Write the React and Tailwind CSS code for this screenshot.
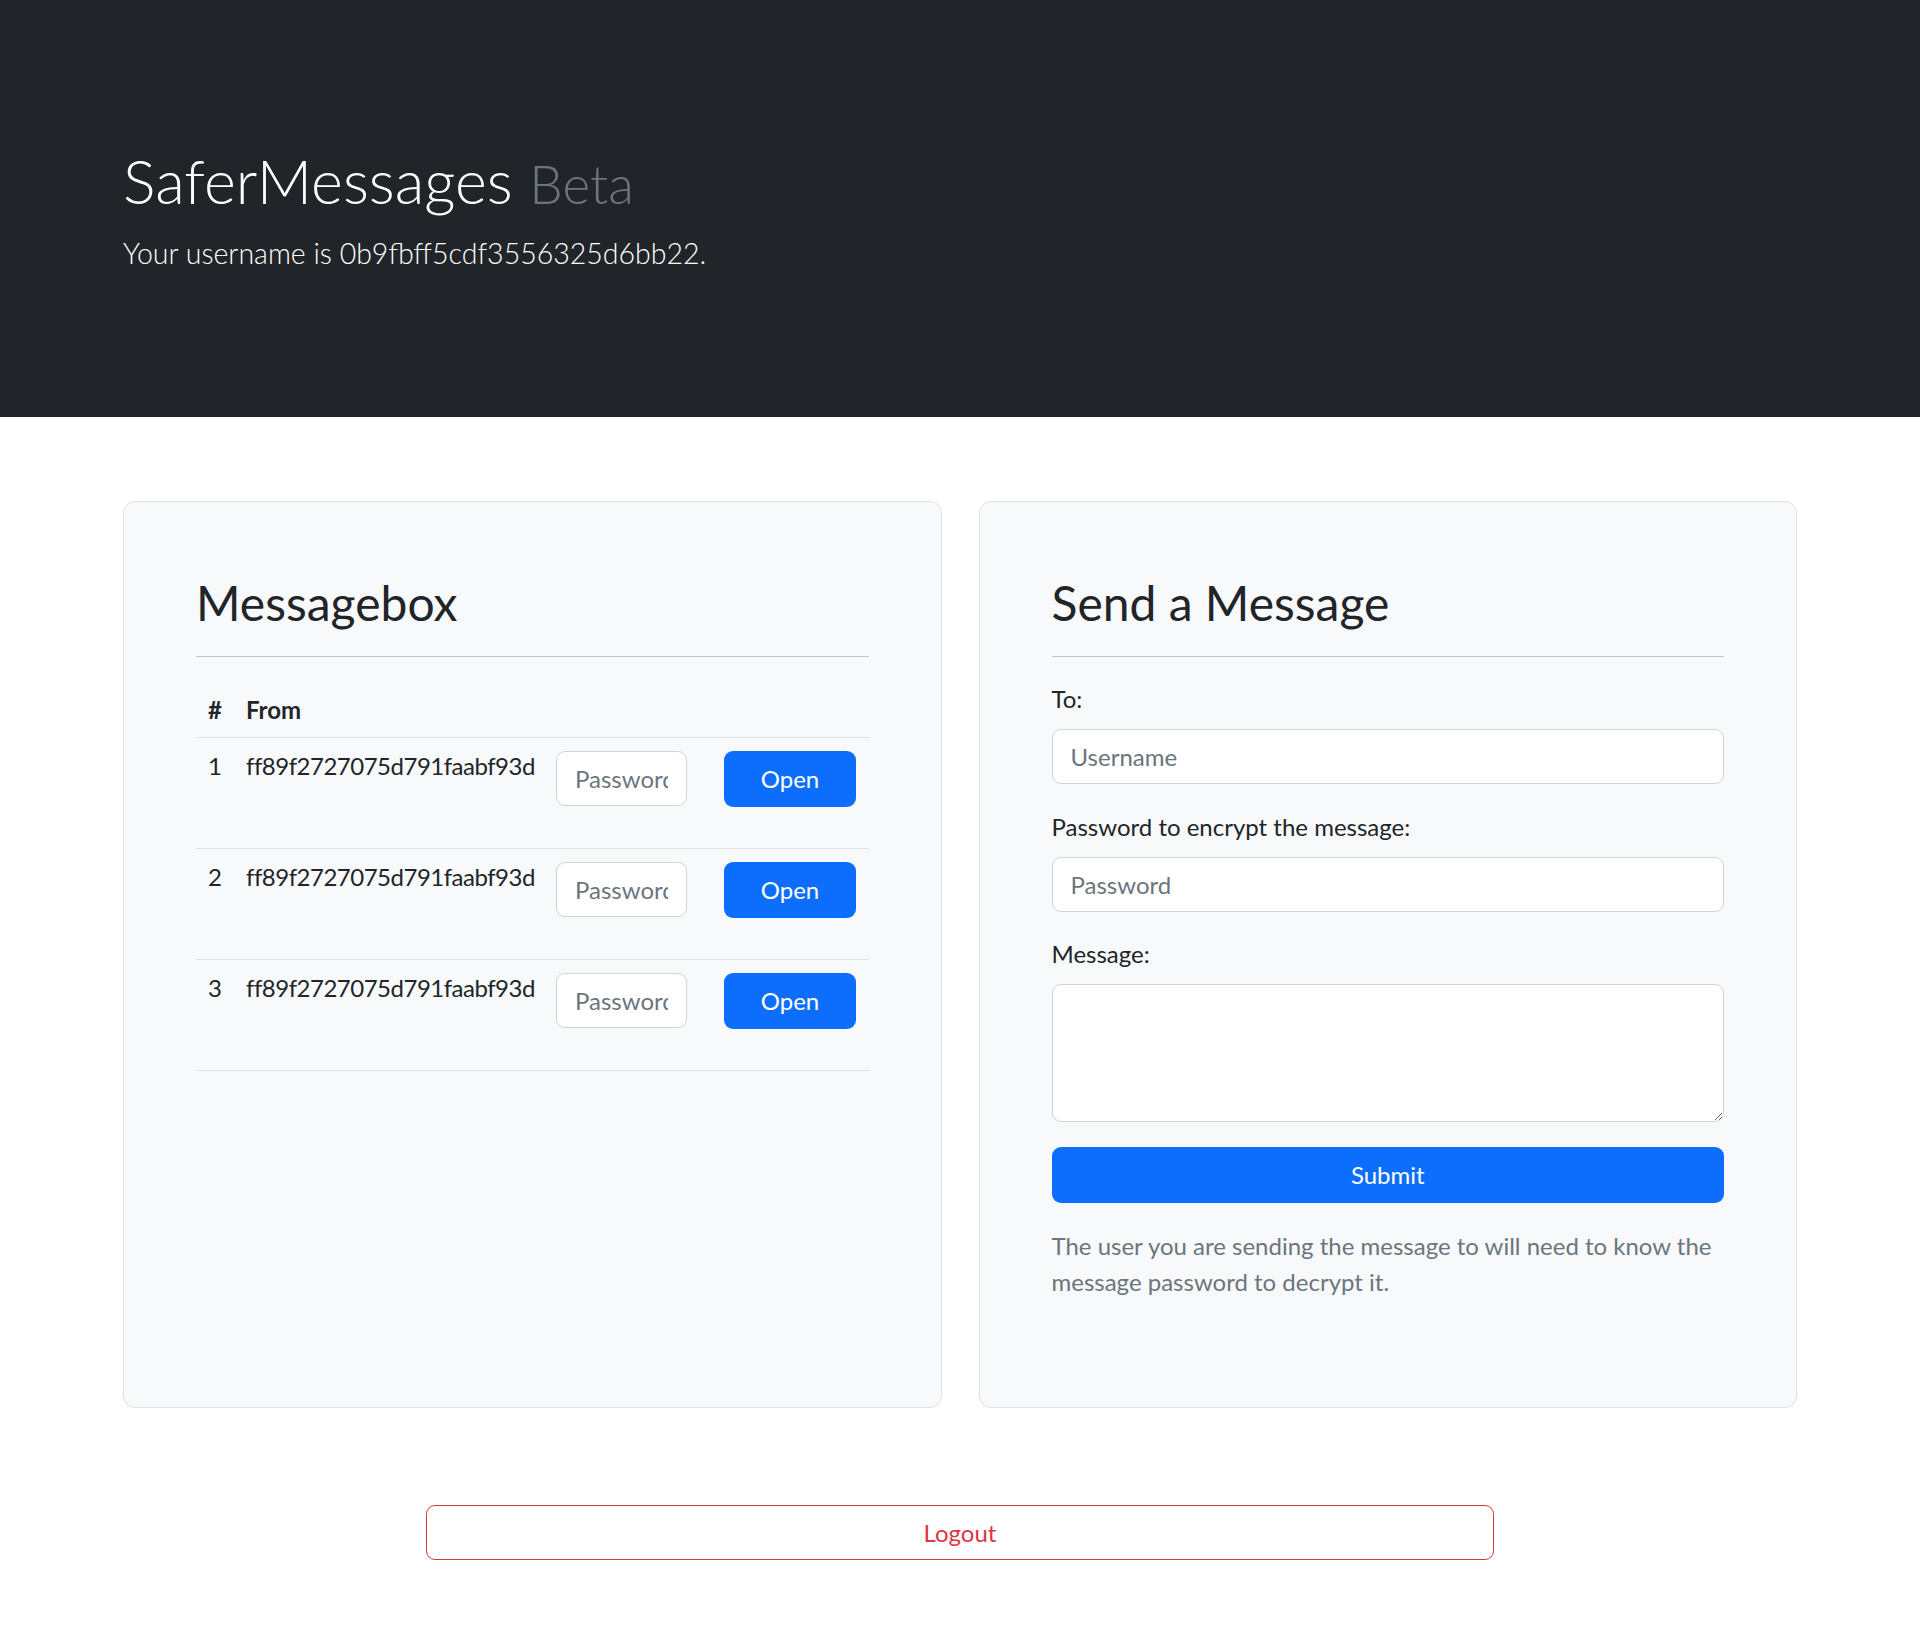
import { useState } from "react";

const font = "font-['Lato','Liberation_Sans',sans-serif]";

const inbox = [
  { id: 1, from: "ff89f2727075d791faabf93d" },
  { id: 2, from: "ff89f2727075d791faabf93d" },
  { id: 3, from: "ff89f2727075d791faabf93d" },
];

const inputCls =
  "block w-full h-[55px] rounded-[9px] border border-[#ced4da] bg-white px-[18px] text-[24px] leading-[36px] text-[#212529] placeholder:text-[#6c757d] outline-none";

const Heading = ({ children }) => (
  <>
    <h2 className="text-[48px] leading-[58px] font-normal text-[#212529]">
      {children}
    </h2>
    <div className="mt-[24px] border-t border-[#c2c4c6]" />
  </>
);

const MessageRow = ({ item }) => {
  const [pw, setPw] = useState("");

  return (
    <div className="grid grid-cols-[38px_310px_168px_156px] h-[111px] border-t border-[#dee2e6] pt-[13px] text-[24px] leading-[36px]">
      <div className="px-[12px] -mt-[3px]">{item.id}</div>
      <div className="px-[12px] -mt-[3px] whitespace-nowrap tracking-[-0.5px]">
        {item.from}
      </div>
      <div className="px-[12px]">
        <input
          type="password"
          value={pw}
          onChange={(e) => setPw(e.target.value)}
          placeholder="Password"
          className="block w-[131px] h-[55px] rounded-[9px] border border-[#ced4da] bg-white px-[18px] text-[24px] text-[#212529] placeholder:text-[#6c757d] outline-none"
        />
      </div>
      <div className="px-[12px]">
        <button className="w-full h-[56px] rounded-[9px] bg-[#0d6efd] text-white text-[24px]">
          Open
        </button>
      </div>
    </div>
  );
};

export default function App() {
  return (
    <div className={`min-h-[1645px] bg-white text-[#212529] ${font}`}>
      <header className="h-[417px] bg-[#212529] px-[123px] pt-[145px]">
        <h1 className="mb-[12px] text-[61px] leading-[72px] font-light text-white">
          SaferMessages{" "}
          <small className="text-[53px] text-[#6c757d]">Beta</small>
        </h1>
        <p className="text-[28.5px] leading-[42px] font-light text-white">
          Your username is 0b9fbff5cdf3556325d6bb22.
        </p>
      </header>

      <main className="px-[123px] pt-[84px]">
        <div className="grid grid-cols-2 gap-[37px]">
          <section className="h-[907px] rounded-[12px] border border-[#dee2e6] bg-[#f8f9fa] p-[72px]">
            <Heading>Messagebox</Heading>
            <div className="mt-[24px] border-b border-[#dee2e6]">
              <div className="grid grid-cols-[38px_310px_168px_156px] h-[56px] pt-[11px] text-[24px] leading-[36px] font-bold">
                <div className="px-[12px]">#</div>
                <div className="px-[12px]">From</div>
                <div />
                <div />
              </div>
              {inbox.map((item) => (
                <MessageRow key={item.id} item={item} />
              ))}
            </div>
          </section>

          <section className="h-[907px] rounded-[12px] border border-[#dee2e6] bg-[#f8f9fa] p-[72px]">
            <Heading>Send a Message</Heading>
            <form
              className="mt-[24px] text-[24px] leading-[36px]"
              onSubmit={(e) => e.preventDefault()}
            >
              <label className="block mb-[12px]">To:</label>
              <input type="text" placeholder="Username" className={inputCls} />

              <label className="block mt-[25px] mb-[12px]">
                Password to encrypt the message:
              </label>
              <input
                type="password"
                placeholder="Password"
                className={inputCls}
              />

              <label className="block mt-[24px] mb-[12px]">Message:</label>
              <textarea className="block w-full h-[138px] rounded-[9px] border border-[#ced4da] bg-white px-[18px] py-[9px] text-[24px] outline-none" />

              <button
                type="submit"
                className="mt-[25px] w-full h-[56px] rounded-[9px] bg-[#0d6efd] text-white text-[24px]"
              >
                Submit
              </button>

              <p className="mt-[25px] text-[#6c757d]">
                The user you are sending the message to will need to know the
                message password to decrypt it.
              </p>
            </form>
          </section>
        </div>

        <div className="flex justify-center pt-[97px]">
          <button className="w-[1068px] h-[55px] rounded-[9px] border border-[#dc3545] bg-white text-[24px] text-[#dc3545]">
            Logout
          </button>
        </div>
      </main>
    </div>
  );
}
